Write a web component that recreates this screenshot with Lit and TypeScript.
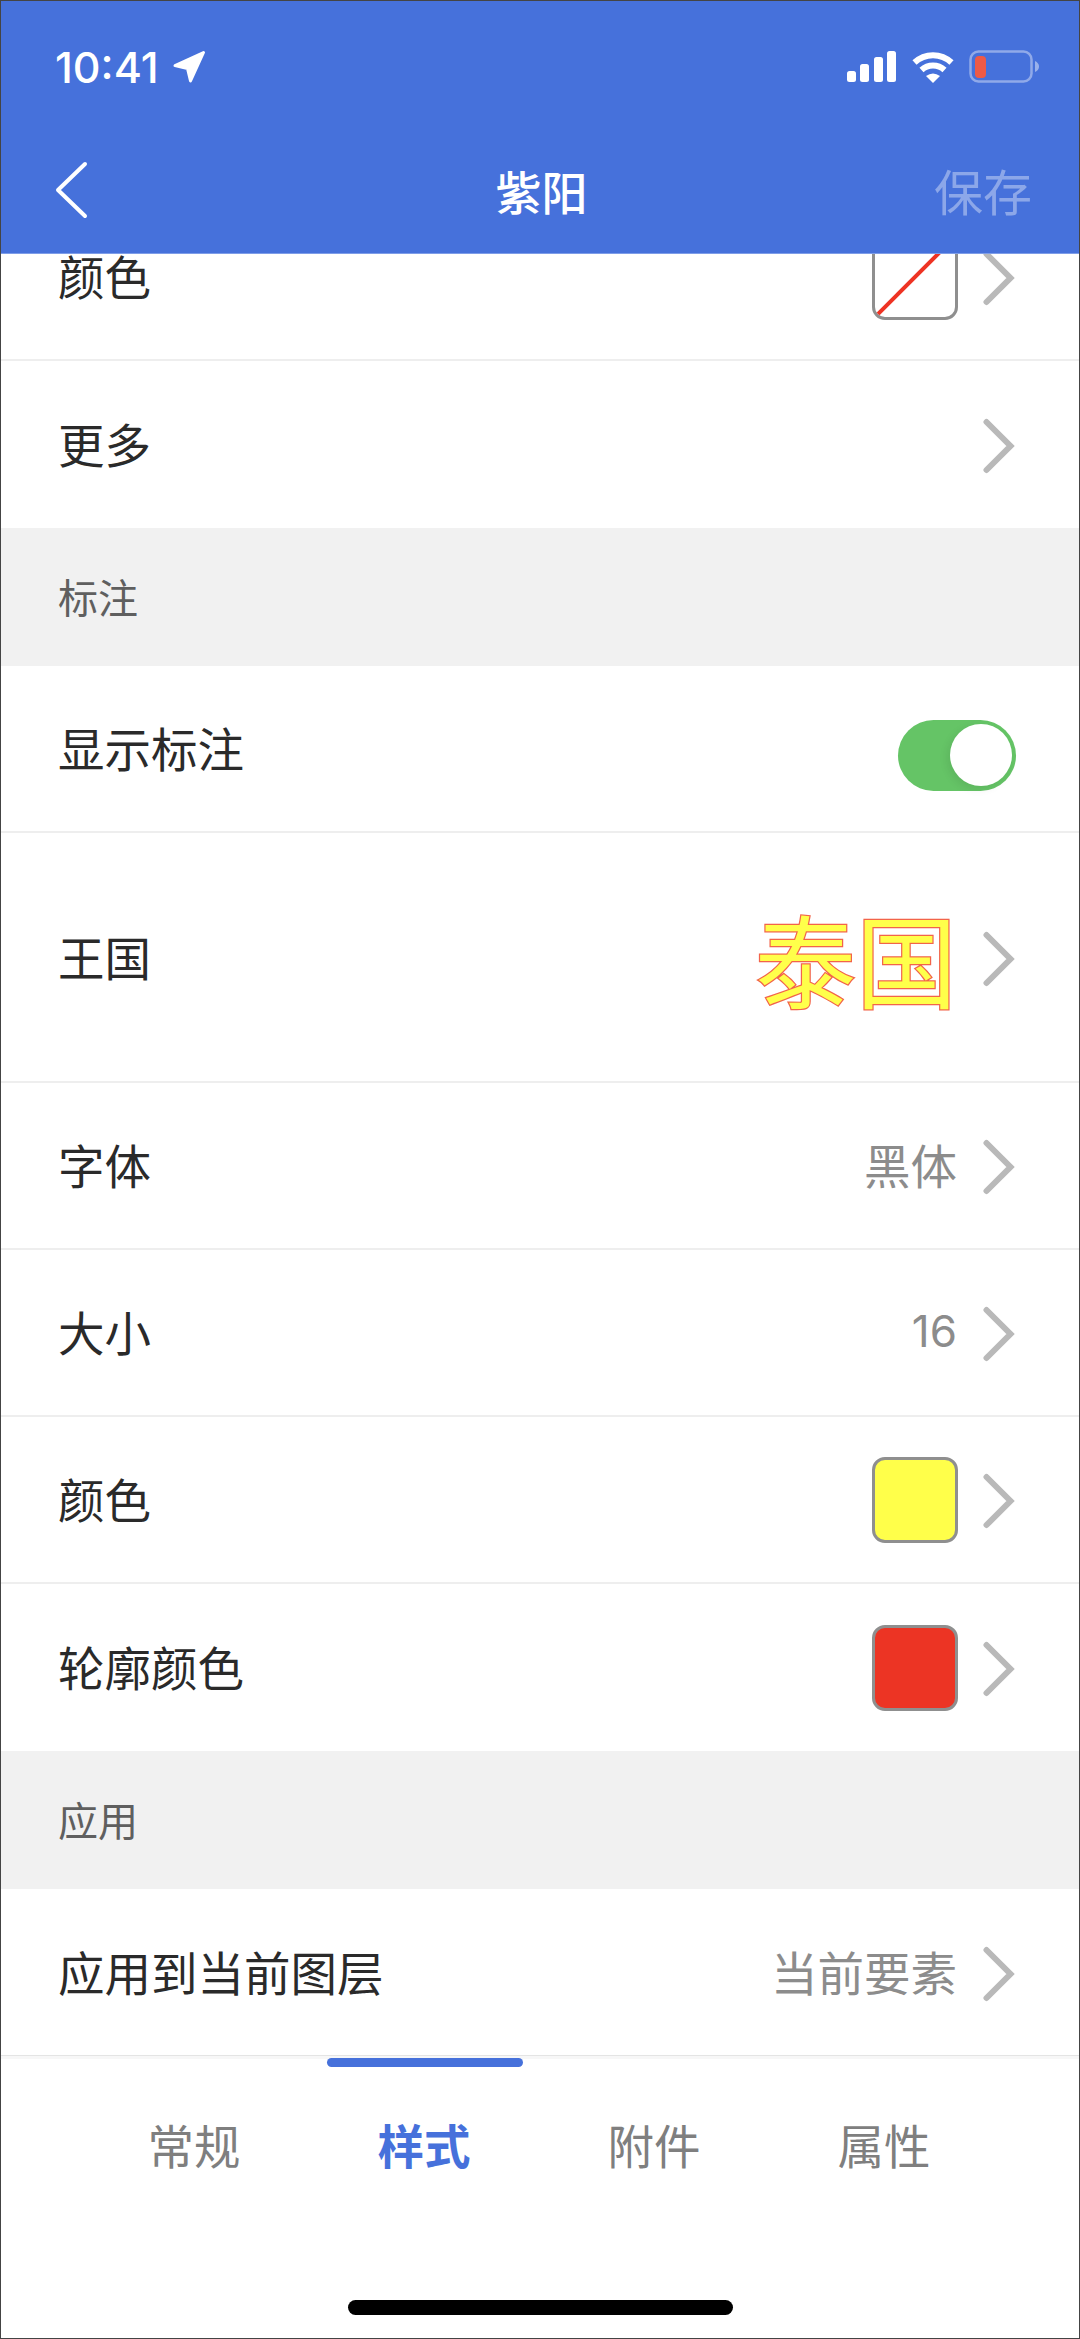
import { LitElement, html, css, svg } from "lit";
import { customElement } from "lit/decorators.js";

type Row = { label: string; value?: string; kind?: string; tall?: boolean; last?: boolean };

const chevron = html`<svg class="chev" viewBox="0 0 32 56" aria-hidden="true"><path d="M3.5 4 L27.5 28 L3.5 52" /></svg>`;

@customElement("app-root")
export class AppRoot extends LitElement {
  static styles = css`
    :host {
      display: block;
      width: 1080px;
      height: 2339px;
      box-sizing: border-box;
      border: 1px solid #444;
      background: #fff;
      font-family: "Inter", "Noto Sans CJK SC", sans-serif;
      overflow: hidden;
    }
    .page { display: flex; flex-direction: column; height: 100%; }
    header {
      flex: none;
      height: 253px;
      box-sizing: border-box;
      background: #4671db;
      border-bottom: 1px solid #7e9de8;
      color: #fff;
      position: relative;
      z-index: 1;
      display: flex;
      flex-direction: column;
    }
    .status {
      height: 126px;
      display: flex;
      justify-content: space-between;
      align-items: flex-start;
      padding: 49px 38px 0 54px;
      box-sizing: border-box;
    }
    .time { display: flex; align-items: center; gap: 13px; font: 500 43px/34px "Inter", sans-serif; }
    .time svg { width: 34px; height: 34px; display: block; }
    .sys { display: flex; align-items: center; gap: 14px; }
    .sys svg { display: block; }
    .nav {
      height: 126px;
      display: grid;
      grid-template-columns: 1fr auto 1fr;
      align-items: center;
      padding: 0 47px 0 50px;
    }
    .back { width: 34px; height: 60px; display: block; margin-left: 4px; }
    .back path { fill: none; stroke: #fff; stroke-width: 4; stroke-linecap: round; stroke-linejoin: round; }
    .title { font: 500 46px/60px "Noto Sans CJK SC", sans-serif; }
    .save { justify-self: end; font: 400 49px/60px "Noto Sans CJK SC", sans-serif; color: rgba(255,255,255,.38); }
    .list { flex: 1; overflow: hidden; min-height: 0; }
    .inner { margin-top: -60px; }
    .row {
      height: 167px;
      box-sizing: border-box;
      border-bottom: 2px solid #eeeeee;
      display: flex;
      align-items: center;
      padding: 0 64px 0 57px;
      font: 400 46.5px/60px "Noto Sans CJK SC", sans-serif;
      color: #2a2a2a;
    }
    .row.tall { height: 250px; }
    .row.last { border-bottom: none; }
    .label { flex: 1; padding-bottom: 3px; }
    .value { color: #8c8c8c; margin-right: 26px; padding-bottom: 3px; }
    .value.num { font-family: "Inter", sans-serif; font-size: 44px; }
    .chev { width: 32px; height: 56px; display: block; flex: none; margin-top: 3px; }
    .chev path { fill: none; stroke: #b9b9b9; stroke-width: 6; stroke-linecap: round; stroke-linejoin: miter; }
    .section {
      height: 138px;
      box-sizing: border-box;
      background: #f1f1f1;
      display: flex;
      align-items: center;
      padding: 0 0 3px 57px;
      font: 400 40px/50px "Noto Sans CJK SC", sans-serif;
      color: #5f5f5f;
    }
    .swatch {
      width: 86px;
      height: 86px;
      box-sizing: border-box;
      border: 3px solid #8f8f8f;
      border-radius: 13px;
      margin-right: 25px;
      overflow: hidden;
      flex: none;
    }
    .swatch svg { display: block; width: 100%; height: 100%; }
    .swatch.yellow { background: #ffff4a; }
    .swatch.red { background: #ec3424; }
    .big {
      font: 400 101px/120px "Noto Sans CJK SC", sans-serif;
      color: #ffff4a;
      -webkit-text-stroke: 2.5px #f2644a;
      paint-order: stroke fill;
      margin-right: 26px;
    }
    .toggle {
      width: 118px;
      height: 71px;
      border-radius: 36px;
      background: #65c466;
      display: flex;
      align-items: center;
      justify-content: flex-end;
      padding-right: 4px;
      box-sizing: border-box;
      margin: 13px -1px 0 0;
    }
    .knob {
      width: 62px;
      height: 62px;
      border-radius: 50%;
      background: #fff;
      box-shadow: -3px 3px 8px rgba(0,0,0,.08);
    }
    .tabs {
      flex: none;
      height: 283px;
      box-sizing: border-box;
      border-top: 1px solid #e4e4e4;
      background: linear-gradient(#f7f7f7 3px, #fff 3px);
      display: flex;
      flex-direction: column;
    }
    .tabrow {
      display: grid;
      grid-template-columns: repeat(4, 230px);
      padding: 0 78px;
      height: 178px;
    }
    .tab {
      position: relative;
      display: flex;
      justify-content: center;
      padding-top: 58px;
      font: 400 46.5px/60px "Noto Sans CJK SC", sans-serif;
      color: #7f7f7f;
    }
    .tab.active { color: #4671db; font-weight: 700; }
    .tab.active::before {
      content: "";
      position: absolute;
      top: 2px;
      left: 18px;
      width: 196px;
      height: 9px;
      border-radius: 5px;
      background: #4671db;
    }
    .homebar {
      width: 385px;
      height: 15px;
      border-radius: 8px;
      background: #000;
      margin: 66px auto 0;
    }
  `;

  private rows: (Row | { section: string })[] = [
    { label: "颜色", kind: "none" },
    { label: "更多", last: true },
    { section: "标注" },
    { label: "显示标注", kind: "toggle" },
    { label: "王国", kind: "big", tall: true },
    { label: "字体", value: "黑体" },
    { label: "大小", value: "16", kind: "num" },
    { label: "颜色", kind: "yellow" },
    { label: "轮廓颜色", kind: "red", last: true },
    { section: "应用" },
    { label: "应用到当前图层", value: "当前要素", last: true },
  ];

  private renderRow(r: Row) {
    const cls = `row ${r.tall ? "tall" : ""} ${r.last ? "last" : ""}`;
    if (r.kind === "toggle") {
      return html`<div class=${cls}><span class="label">${r.label}</span><div class="toggle"><div class="knob"></div></div></div>`;
    }
    let mid = html``;
    if (r.kind === "none") {
      mid = html`<div class="swatch"><svg viewBox="0 0 80 80">${svg`<line x1="0" y1="80" x2="80" y2="0" stroke="#ee3323" stroke-width="4"/>`}</svg></div>`;
    } else if (r.kind === "yellow" || r.kind === "red") {
      mid = html`<div class="swatch ${r.kind}"></div>`;
    } else if (r.kind === "big") {
      mid = html`<span class="big">泰国</span>`;
    } else if (r.value) {
      mid = html`<span class="value ${r.kind === "num" ? "num" : ""}">${r.value}</span>`;
    }
    return html`<div class=${cls}><span class="label">${r.label}</span>${mid}${chevron}</div>`;
  }

  render() {
    return html`<div class="page">
      <header>
        <div class="status">
          <div class="time">10:41
            <svg viewBox="0 0 34 34"><path d="M3 15.5 L31.5 2.5 L18.5 31 L15.5 18.5 Z" fill="#fff" stroke="#fff" stroke-width="3" stroke-linejoin="round"/></svg>
          </div>
          <div class="sys">
            <svg width="50" height="31" viewBox="0 0 50 31" fill="#fff">
              <rect x="0" y="20" width="9" height="11" rx="2.5"/>
              <rect x="13" y="13" width="9" height="18" rx="2.5"/>
              <rect x="27" y="6" width="9" height="25" rx="2.5"/>
              <rect x="40" y="0" width="9" height="31" rx="2.5"/>
            </svg>
            <svg width="44" height="32" viewBox="0 0 44 32" fill="none" stroke="#fff">
              <path d="M3.5 11.5 A27 27 0 0 1 40.5 11.5" stroke-width="6"/>
              <path d="M10.5 19 A17 17 0 0 1 33.5 19" stroke-width="6"/>
              <path d="M22 32 L15 25 Q22 20 29 25 Z" fill="#fff" stroke="none"/>
            </svg>
            <svg width="72" height="33" viewBox="0 0 72 33">
              <rect x="1.5" y="1.5" width="61" height="30" rx="8" fill="none" stroke="#fff" stroke-opacity=".4" stroke-width="2.5"/>
              <rect x="6" y="6" width="11" height="22" rx="4" fill="#ee5a47"/>
              <path d="M66 11 Q70 13 70 16.5 Q70 20 66 22 Z" fill="#fff" fill-opacity=".45"/>
            </svg>
          </div>
        </div>
        <div class="nav">
          <svg class="back" viewBox="0 0 34 60"><path d="M30 4 L3 30 L30 56"/></svg>
          <div class="title">紫阳</div>
          <div class="save">保存</div>
        </div>
      </header>
      <div class="list"><div class="inner">
        ${this.rows.map((r) =>
          "section" in r
            ? html`<div class="section">${r.section}</div>`
            : this.renderRow(r)
        )}
      </div></div>
      <div class="tabs">
        <div class="tabrow">
          <div class="tab">常规</div>
          <div class="tab active">样式</div>
          <div class="tab">附件</div>
          <div class="tab">属性</div>
        </div>
        <div class="homebar"></div>
      </div>
    </div>`;
  }
}
